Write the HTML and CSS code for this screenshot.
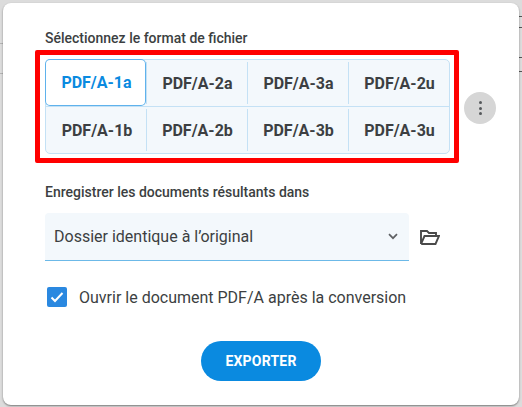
FILE: index.html
```html
<!DOCTYPE html>
<html lang="fr">
<head>
    <meta charset="UTF-8">
    <title>Exporter PDF/A</title>
    <link rel="stylesheet" href="styles.css">
</head>
<body>
    <div class="dialog">
        <p class="label">Sélectionnez le format de fichier</p>
        <div class="format-row">
            <div class="formats">
                <button class="fmt active">PDF/A-1a</button>
                <button class="fmt">PDF/A-2a</button>
                <button class="fmt">PDF/A-3a</button>
                <button class="fmt">PDF/A-2u</button>
                <button class="fmt">PDF/A-1b</button>
                <button class="fmt">PDF/A-2b</button>
                <button class="fmt">PDF/A-3b</button>
                <button class="fmt">PDF/A-3u</button>
                <div class="highlight"></div>
            </div>
            <span class="more"><i></i><i></i><i></i></span>
        </div>

        <p class="label label-save">Enregistrer les documents résultants dans</p>
        <div class="folder-row">
            <div class="select">
                <span>Dossier identique à l’original</span>
                <svg class="chevron" width="10" height="7" viewBox="0 0 10 7"><path d="M1 1.200 5 5.200l4-4" fill="none" stroke="#5f6164" stroke-width="1.700"/></svg>
            </div>
            <svg class="folder" width="20" height="15" viewBox="0 0 20 15"><path d="M1 14V1h6l2 2h7v3M1 14h14.500L19 6H4.500L1 14" fill="none" stroke="#4a4a4a" stroke-width="1.900"/></svg>
        </div>

        <label class="check-row">
            <span class="check">
                <svg width="20" height="20" viewBox="0 0 20 20"><path d="M4.500 10.500 8 14l7.500-8" fill="none" stroke="#fff" stroke-width="2"/></svg>
            </span>
            Ouvrir le document PDF/A après la conversion
        </label>

        <div class="actions">
            <button class="export">EXPORTER</button>
        </div>
    </div>
</body>
</html>
```

FILE: styles.css
```css
*{
    margin: 0;
    padding: 0;
    box-sizing: border-box;
}
html, body{
    height: 100%;
}
body{
    overflow: hidden;
    font-family: Roboto, "Liberation Sans", sans-serif;
    color: #3c3f42;
    padding: 3px 3px 2px;
    background-color: #dcdcdc;
    /* fenetre derriere le dialogue */
    background-image:
        linear-gradient(#b4b4b4, #b4b4b4),
        linear-gradient(#b4b4b4, #b4b4b4),
        linear-gradient(#555, #555),
        linear-gradient(#555, #555),
        linear-gradient(#555, #555),
        linear-gradient(#555, #555);
    background-repeat: no-repeat;
    background-size: 3px 1px;
    background-position: 0 43px, 0 73px, 519px 16px, 519px 27px, 519px 57px, 519px 71px;
}
.dialog{
    height: 402px;
    background: #fff;
    border-radius: 8px;
    padding: 27px 0 0 42px;
    box-shadow: 0 1px 2px rgba(0,0,0,0.45);
}
.label{
    font-size: 14px;
    line-height: 16px;
    height: 16px;
    font-weight: 500;
}
.label-save{
    margin-top: 30px;
}
.format-row{
    display: flex;
    align-items: center;
    margin-top: 13px;
}
.formats{
    position: relative;
    display: grid;
    grid-template-columns: 100px repeat(3, 101px);
    grid-template-rows: 46px 47px;
    width: 405px;
    background: #f3f8fc;
    border: 1px solid #c4e1f5;
    border-radius: 5px;
}
.fmt{
    border: 0;
    padding-left: 2px;
    background: linear-gradient(#c4e1f5, #c4e1f5) left center / 1px calc(100% - 4px) no-repeat;
    font: 700 16px Roboto, "Liberation Sans", sans-serif;
    color: #3c3f42;
}
.fmt:nth-child(4n+1){
    background: none;
}
.fmt:nth-child(n+5){
    border-top: 1px solid #c4e1f5;
}
.fmt.active{
    background: #fff;
    color: #0a8ae0;
    box-shadow: inset 0 0 0 1px #5fb2ec;
    border-radius: 5px;
    margin: -1px 0 0 -1px;
}
.highlight{
    position: absolute;
    left: -11px;
    right: -10px;
    top: -10px;
    bottom: -10px;
    border: 5px solid #ff0000;
    border-radius: 2px;
}
.more{
    display: flex;
    flex-direction: column;
    align-items: center;
    justify-content: center;
    gap: 2.500px;
    width: 32px;
    height: 32px;
    margin: 3px 0 0 14px;
    border-radius: 50%;
    background: #d6d6d6;
}
.more i{
    width: 3px;
    height: 3px;
    border-radius: 50%;
    background: #55585b;
}
.folder-row{
    display: flex;
    align-items: center;
    margin-top: 13px;
}
.select{
    display: flex;
    align-items: center;
    justify-content: space-between;
    width: 364px;
    height: 48px;
    padding: 0 11px 0 9px;
    font-size: 16px;
    background: #f3f8fc;
    border-bottom: 1px solid #6cb9e8;
    border-radius: 4px 4px 0 0;
}
.folder{
    margin-left: 11px;
}
.check-row{
    display: flex;
    align-items: center;
    margin-top: 26px;
    font-size: 16px;
}
.check{
    display: flex;
    width: 20px;
    height: 20px;
    margin: 0 12px 0 2px;
    border-radius: 2px;
    background: #2a88e0;
}
.actions{
    display: flex;
    justify-content: center;
    margin-top: 34px;
    padding-right: 42px;
}
.export{
    width: 120px;
    height: 40px;
    border: 0;
    border-radius: 20px;
    background: #0a8ae0;
    color: #fff;
    font: 700 14px Roboto, "Liberation Sans", sans-serif;
    letter-spacing: 0.2px;
}
```
